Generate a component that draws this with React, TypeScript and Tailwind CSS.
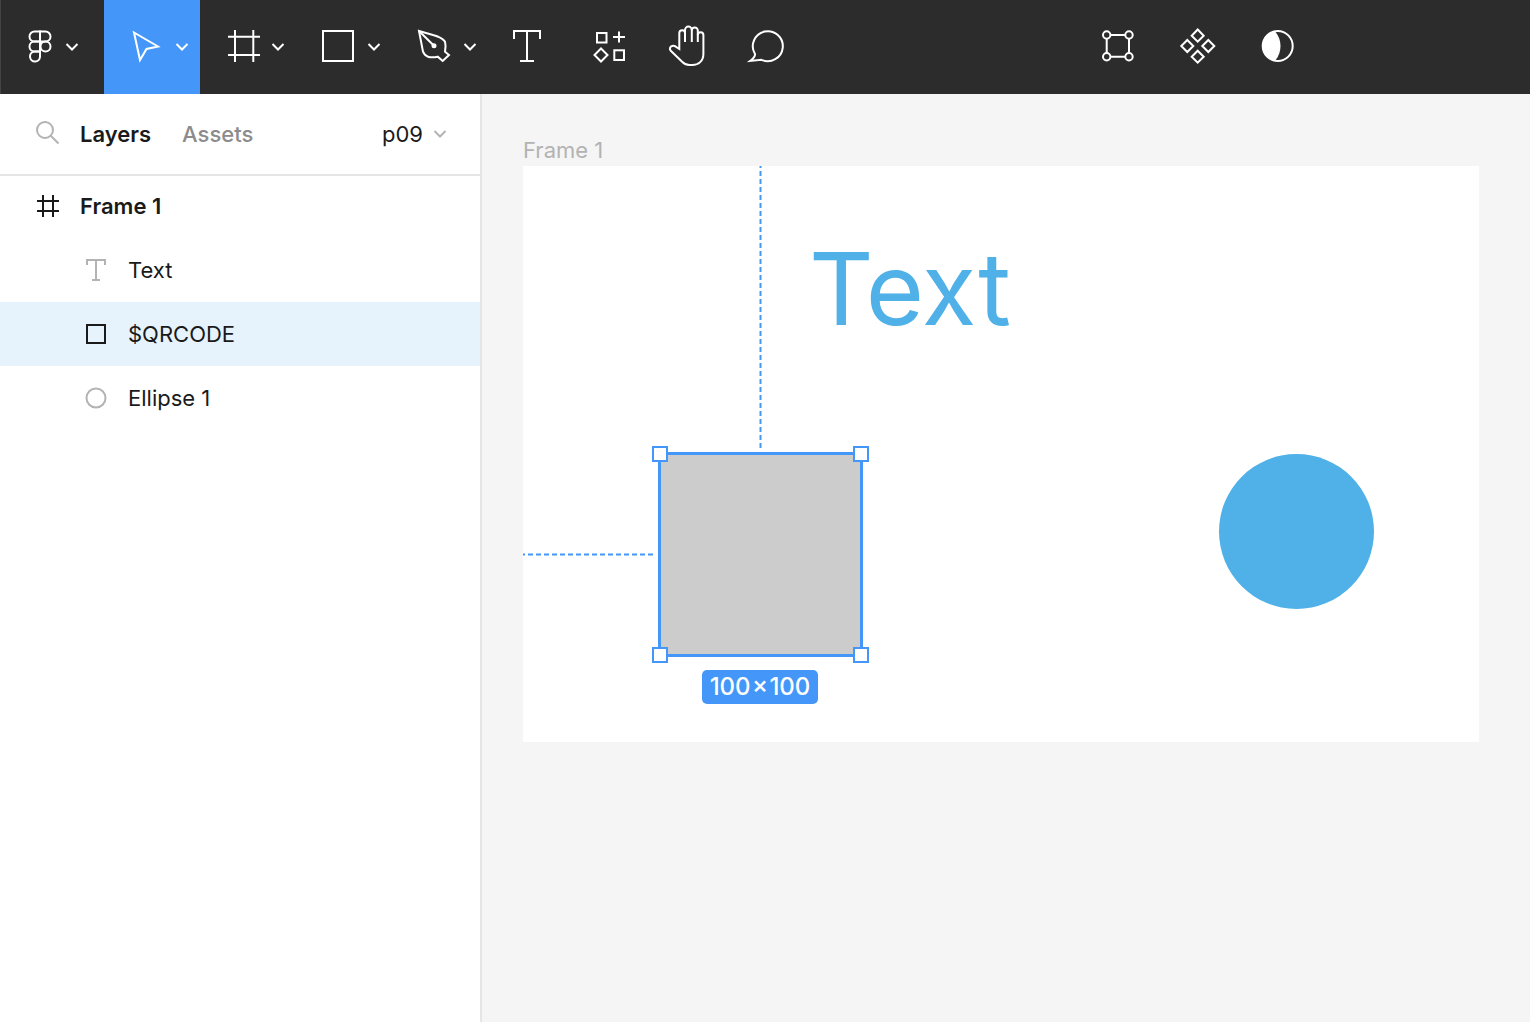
import React from 'react';

type IconProps = {
  children: React.ReactNode;
};

// every toolbar glyph sits in the same 32px box, white 2px stroke
const ToolIcon = ({ children }: IconProps) => (
  <svg width="32" height="32" viewBox="0 0 32 32" fill="none" stroke="white" strokeWidth="2" className="shrink-0 overflow-visible">
    {children}
  </svg>
);

const Chevron = () => (
  <svg width="16" height="16" viewBox="0 0 16 16" fill="none" stroke="white" strokeWidth="2" className="shrink-0">
    <path d="M2.5 6L8 11.5L13.5 6" />
  </svg>
);

type ToolProps = {
  icon: React.ReactNode;
  active?: boolean;
};

const DropTool = ({ icon, active }: ToolProps) => (
  <div className={active ? 'flex h-full w-24 items-center gap-3 bg-[#4497f9] pb-[2px] pl-[26px]' : 'flex h-full w-24 items-center gap-3 pb-[2px] pl-[26px]'}>
    {icon}
    <Chevron />
  </div>
);

const Toolbar = () => (
  <header className="flex h-[94px] shrink-0 items-center border-l border-[#444444] bg-[#2c2c2c]">
    <div className="flex h-full w-[103px] items-center gap-2 pb-[2px] pl-[23px]">
      <ToolIcon>
        <path d="M16 1.5H10.5a5 5 0 0 0 0 10H16Z" />
        <path d="M16 1.5H21.5a5 5 0 0 1 0 10H16Z" />
        <path d="M16 11.5H10.5a5 5 0 0 0 0 10H16Z" />
        <circle cx="21.5" cy="16.5" r="5" />
        <path d="M10.5 21.5H16V26.5a5 5 0 1 1-5.5-5Z" />
      </ToolIcon>
      <Chevron />
    </div>
    <DropTool
      active
      icon={
        <ToolIcon>
          <path d="M4 2.5L28 16.5L16.5 19L10 30Z" />
        </ToolIcon>
      }
    />
    <DropTool
      icon={
        <ToolIcon>
          <path d="M9 0V32M27.3 0V32M2 6.7H34M2 25H34" />
        </ToolIcon>
      }
    />
    <DropTool
      icon={
        <ToolIcon>
          <rect x="1" y="1" width="30" height="30" />
        </ToolIcon>
      }
    />
    <DropTool
      icon={
        <ToolIcon>
          <path d="M1 1L15 5C21 6.5 25 9 27 11.7C28 15 27.5 19 27 21.7L31 25L24.7 31L19.7 26.7C16 27.5 12.5 27.5 10 26.7C7.5 26 6 24 5 21.7Z" />
          <path d="M1 1L16 15.7" />
          <circle cx="16" cy="15.7" r="2.5" fill="white" stroke="none" />
        </ToolIcon>
      }
    />
    <div className="flex h-full items-center pb-[2px]">
      <div className="ml-[23px]">
        <ToolIcon>
          <path d="M3 9V1H29V9M16 1V31M9 31H23" />
        </ToolIcon>
      </div>
      <div className="ml-[51px]">
        <ToolIcon>
          <rect x="3" y="3" width="9.5" height="9.5" />
          <path d="M19 7H31M25 1.5V12.5" />
          <path d="M7 18.5L13.5 25L7 31.5L0.5 25Z" />
          <rect x="20.3" y="20.3" width="9.7" height="9.7" />
        </ToolIcon>
      </div>
      <div className="ml-[46px]">
        <ToolIcon>
          <path d="M7.3 14V3a2.85 2.85 0 0 1 5.7 0" />
          <path d="M13 12V0a3.4 3.4 0 0 1 6.8 0V12" />
          <path d="M19.8 0.5a3 3 0 0 1 6 0V12" />
          <path d="M25.8 5a2.8 2.8 0 0 1 5.6 0V24c0 7-5 11-11 11h-3c-3 0-5-1-7-3L-1 21c-2-2-1-4.5 1-5c2-1 3.5 0 5 1.5L7.3 19V14" />
        </ToolIcon>
      </div>
      <div className="ml-[46px]">
        <ToolIcon>
          <path d="M5 24A15 15 0 1 1 11.5 29.8L0 31C2.5 29 5.5 27 5 24Z" />
        </ToolIcon>
      </div>
      <div className="ml-[320px]">
        <ToolIcon>
          <path d="M8.5 5H23M4.7 8.5V23M27 8.5V23M8.5 26.7H23" />
          <circle cx="4.7" cy="5" r="3.7" />
          <circle cx="27" cy="5" r="3.7" />
          <circle cx="4.7" cy="26.7" r="3.7" />
          <circle cx="27" cy="26.7" r="3.7" />
        </ToolIcon>
      </div>
      <div className="ml-[48px]">
        <ToolIcon>
          <path d="M15.7 -0.5L21.7 5.7L15.7 11.7L9.7 5.7Z" />
          <path d="M5.3 10L11.3 16L5.3 22L-0.7 16Z" />
          <path d="M26.3 10L32.3 16L26.3 22L20.3 16Z" />
          <path d="M15.7 20.7L21.7 26.7L15.7 32.7L9.7 26.7Z" />
        </ToolIcon>
      </div>
      <div className="ml-[48px]">
        <ToolIcon>
          <circle cx="15.7" cy="16" r="15" />
          <path d="M13 1.2A15 15 0 0 0 13 30.8C17 26 18.5 21 18.5 16C18.5 11 17 6 13 1.2Z" fill="white" stroke="none" />
        </ToolIcon>
      </div>
    </div>
  </header>
);

type RowProps = {
  icon: React.ReactNode;
  label: string;
  selected?: boolean;
};

const LayerRow = ({ icon, label, selected }: RowProps) => (
  <div className={selected ? 'flex h-16 items-center gap-5 bg-[#e6f3fd] pl-[84px]' : 'flex h-16 items-center gap-5 pl-[84px]'}>
    {icon}
    <span className="text-[22px] leading-none text-[#1a1a1a]">{label}</span>
  </div>
);

const Sidebar = () => (
  <aside className="flex w-[482px] shrink-0 flex-col border-r-2 border-[#e5e5e5] bg-white">
    <div className="flex h-[82px] shrink-0 items-center border-b-2 border-[#e5e5e5] pl-9 pr-[33px]">
      <svg width="24" height="24" viewBox="0 0 24 24" fill="none" stroke="#b3b3b3" strokeWidth="2" className="mb-[2px] shrink-0">
        <circle cx="9" cy="9" r="8" />
        <path d="M15 15L22.5 22.5" />
      </svg>
      <span className="ml-5 text-[22px] font-semibold text-[#1a1a1a]">Layers</span>
      <span className="ml-[31px] text-[22px] font-medium text-[#8c8c8c]">Assets</span>
      <span className="ml-auto text-[22px] text-[#1a1a1a]">p09</span>
      <svg width="14" height="14" viewBox="0 0 14 14" fill="none" stroke="#b3b3b3" strokeWidth="2" className="ml-[10px] shrink-0">
        <path d="M1.5 4L7 9.5L12.5 4" />
      </svg>
    </div>
    <div className="flex h-[62px] items-center gap-5 pb-[2px] pl-9">
      <svg width="24" height="24" viewBox="0 0 24 24" fill="none" stroke="#1a1a1a" strokeWidth="2" className="shrink-0">
        <path d="M7 1V23M17 1V23M1 7H23M1 17H23" />
      </svg>
      <span className="text-[22px] font-semibold leading-none text-[#1a1a1a]">Frame 1</span>
    </div>
    <LayerRow
      label="Text"
      icon={
        <svg width="24" height="24" viewBox="0 0 24 24" fill="none" stroke="#b3b3b3" strokeWidth="2" className="shrink-0">
          <path d="M3 7V2H21V7M12 2V22M8 22H16" />
        </svg>
      }
    />
    <LayerRow
      label="$QRCODE"
      selected
      icon={
        <svg width="24" height="24" viewBox="0 0 24 24" fill="none" stroke="#1a1a1a" strokeWidth="2" className="shrink-0">
          <rect x="3" y="3" width="18" height="18" />
        </svg>
      }
    />
    <LayerRow
      label="Ellipse 1"
      icon={
        <svg width="24" height="24" viewBox="0 0 24 24" fill="none" stroke="#b3b3b3" strokeWidth="2" className="shrink-0">
          <circle cx="12" cy="12" r="9.5" />
        </svg>
      }
    />
  </aside>
);

const Handle = ({ className }: { className: string }) => (
  <div className={`absolute h-4 w-4 border-2 border-[#4497f9] bg-white ${className}`} />
);

const Canvas = () => (
  <main className="relative flex-1 overflow-hidden bg-[#f5f5f5]">
    <span className="absolute left-[41px] top-[41px] text-[22px] leading-[30px] text-[#b3b3b3]">Frame 1</span>
    <div className="absolute left-[41px] top-[72px] h-[576px] w-[956px] bg-white">
      <span className="absolute left-[286px] top-[63px] text-[100px] leading-[120px] text-[#4fb1e7]">Text</span>
      <div className="absolute left-[696px] top-[288px] h-[155px] w-[155px] rounded-full bg-[#4fb1e7]" />

      {/* guides sit on the half pixel, that is what gives them the soft edge */}
      <svg className="absolute left-[235px] top-0" width="4" height="283" fill="none" stroke="#4497f9" strokeWidth="2">
        <path d="M2.5 0V283" strokeDasharray="5 3" strokeDashoffset="3" />
      </svg>
      <svg className="absolute left-0 top-[386px]" width="132" height="4" fill="none" stroke="#4497f9" strokeWidth="2">
        <path d="M0 2.5H132" strokeDasharray="5 3" strokeDashoffset="3" />
      </svg>

      <div className="absolute left-[135px] top-[286px] h-[205px] w-[205px] border-[3px] border-[#4497f9] bg-[#cccccc]" />
      <Handle className="left-[129px] top-[280px]" />
      <Handle className="left-[330px] top-[280px]" />
      <Handle className="left-[129px] top-[481px]" />
      <Handle className="left-[330px] top-[481px]" />

      <div className="absolute left-[179px] top-[504px] flex h-[34px] w-[116px] items-center justify-center rounded-[5px] bg-[#4497f9] text-[24px] font-medium leading-none text-white [word-spacing:-5px]">
        100 × 100
      </div>
    </div>
  </main>
);

export default function App() {
  return (
    <div className="flex h-[1022px] w-[1530px] flex-col overflow-hidden bg-white font-['Inter',sans-serif]">
      <Toolbar />
      <div className="flex min-h-0 flex-1">
        <Sidebar />
        <Canvas />
      </div>
    </div>
  );
}
